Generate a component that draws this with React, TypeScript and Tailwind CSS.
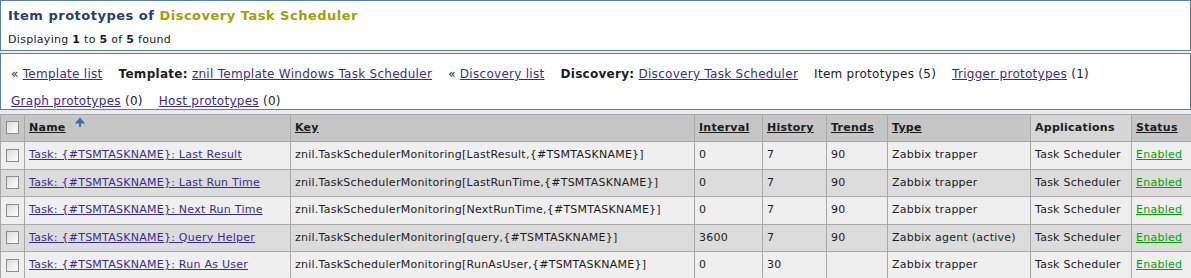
import React from "react";

const rows = [
  { name: "Task: {#TSMTASKNAME}: Last Result", key: "znil.TaskSchedulerMonitoring[LastResult,{#TSMTASKNAME}]", interval: "0", history: "7", trends: "90", type: "Zabbix trapper" },
  { name: "Task: {#TSMTASKNAME}: Last Run Time", key: "znil.TaskSchedulerMonitoring[LastRunTime,{#TSMTASKNAME}]", interval: "0", history: "7", trends: "90", type: "Zabbix trapper" },
  { name: "Task: {#TSMTASKNAME}: Next Run Time", key: "znil.TaskSchedulerMonitoring[NextRunTime,{#TSMTASKNAME}]", interval: "0", history: "7", trends: "90", type: "Zabbix trapper" },
  { name: "Task: {#TSMTASKNAME}: Query Helper", key: "znil.TaskSchedulerMonitoring[query,{#TSMTASKNAME}]", interval: "3600", history: "7", trends: "90", type: "Zabbix agent (active)" },
  { name: "Task: {#TSMTASKNAME}: Run As User", key: "znil.TaskSchedulerMonitoring[RunAsUser,{#TSMTASKNAME}]", interval: "0", history: "30", trends: "", type: "Zabbix trapper" },
];

function Check() {
  return <span className="inline-block w-[13px] h-[13px] border border-[#8c8c8c] bg-gradient-to-br from-[#dcdcdc] to-[#ffffff] align-middle" />;
}

const th = "border border-[#a8a8a8] px-[4px] text-left font-bold text-[#1c1c1c]";
const td = "border border-[#a8a8a8] px-[4px] text-left whitespace-nowrap";

export default function App() {
  return (
    <div className="w-[1191px] h-[278px] bg-[#e8ecf0] text-[11px] tracking-[0.25px] text-[#1c1c1c] overflow-hidden" style={{ fontFamily: "'DejaVu Sans', Verdana, sans-serif" }}>
      <div className="h-[51px] bg-white border border-[#5a80aa] px-[7px] pt-[5px]">
        <div className="text-[13px] font-bold leading-[20px] tracking-[0.5px]">
          <span className="text-[#233e78]">Item prototypes of </span>
          <span className="text-[#a3a000]">Discovery Task Scheduler</span>
        </div>
        <div className="mt-[7px] leading-[14px] tracking-[0.3px]">
          Displaying <b>1</b> to <b>5</b> of <b>5</b> found
        </div>
      </div>
      <div className="mt-[2px] h-[57px] bg-white border border-[#5a80aa] px-[10px] pt-[7px] leading-[27px] text-[12px] tracking-[0.28px] overflow-hidden">
        <div className="flex flex-wrap gap-x-[16px]">
          <span>« <a className="text-[#3a2a98] underline">Template list</a></span>
          <span><b>Template:</b> <a className="text-[#3a2a98] underline">znil Template Windows Task Scheduler</a></span>
          <span>« <a className="text-[#3a2a98] underline">Discovery list</a></span>
          <span><b>Discovery:</b> <a className="text-[#3a2a98] underline">Discovery Task Scheduler</a></span>
          <span>Item prototypes (5)</span>
          <span><a className="text-[#3a2a98] underline">Trigger prototypes</a> (1)</span>
          <span className="-ml-[16px] basis-full h-0" />
          <span><a className="text-[#3a2a98] underline">Graph prototypes</a> (0)</span>
          <span><a className="text-[#3a2a98] underline">Host prototypes</a> (0)</span>
        </div>
      </div>
      <table className="mt-[4px] w-[1191px] border-collapse table-fixed bg-white">
        <colgroup>
          <col className="w-[24px]" />
          <col className="w-[266px]" />
          <col className="w-[404px]" />
          <col className="w-[68px]" />
          <col className="w-[64px]" />
          <col className="w-[61px]" />
          <col className="w-[143px]" />
          <col className="w-[101px]" />
          <col className="w-[60px]" />
        </colgroup>
        <thead>
          <tr className="h-[27px] bg-[#c6c6c6]">
            <th className="border border-[#a8a8a8] text-center"><Check /></th>
            <th className={th}>
              <span className="underline">Name</span>
              <span className="relative inline-block w-[16px] h-[14px] align-top ml-[3px]">
                <svg width="16" height="14" viewBox="0 0 16 14" className="absolute left-0 top-[-3px]">
                  <path d="M3 5 L3 11 M0.5 8.5 L3 11.5 L5.5 8.5" stroke="#c4c4c4" strokeWidth="2" fill="none" />
                  <path d="M11 10 L11 3 M8 5.5 L11 2 L14 5.5 Z" stroke="#3d6fb8" strokeWidth="2" fill="#3d6fb8" />
                </svg>
              </span>
            </th>
            <th className={th}><span className="underline">Key</span></th>
            <th className={th}><span className="underline">Interval</span></th>
            <th className={th}><span className="underline">History</span></th>
            <th className={th}><span className="underline">Trends</span></th>
            <th className={th}><span className="underline">Type</span></th>
            <th className={th + " bg-[#d6d6d6]"}>Applications</th>
            <th className={th}><span className="underline">Status</span></th>
          </tr>
        </thead>
        <tbody>
          {rows.map((r, i) => (
            <tr key={i} className={i % 2 === 0 ? "h-[27.5px] bg-[#efefef]" : "h-[27.5px] bg-[#dcdcdc]"}>
              <td className="border border-[#a8a8a8] text-center"><Check /></td>
              <td className={td}><a className="text-[#3a2a98] underline">{r.name}</a></td>
              <td className={td}>{r.key}</td>
              <td className={td}>{r.interval}</td>
              <td className={td}>{r.history}</td>
              <td className={td}>{r.trends}</td>
              <td className={td}>{r.type}</td>
              <td className={td}>Task Scheduler</td>
              <td className={td}><a className="text-[#00a600] underline">Enabled</a></td>
            </tr>
          ))}
        </tbody>
      </table>
    </div>
  );
}
